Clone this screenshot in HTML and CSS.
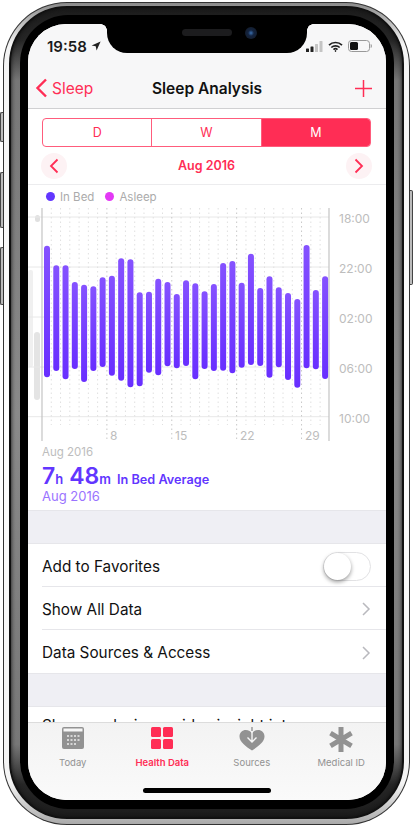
FILE: index.html
```html
<!DOCTYPE html>
<html lang="en">
<head>
	<meta charset="UTF-8">
	<title>Sleep Analysis</title>
	<link rel="stylesheet" href="styles.css">
</head>
<body>
	<div class="side-btn left-1"></div>
	<div class="side-btn left-2"></div>
	<div class="side-btn left-3"></div>
	<div class="side-btn right-1"></div>
	<div class="phone">
		<div class="rim">
			<div class="band">
				<div class="bezel">
					<div class="screen">
						<div class="notch">
							<span class="speaker"></span>
							<span class="camera"></span>
						</div>

						<div class="top-bar">
							<div class="status">
								<div class="status-left">
									<span class="time">19:58</span>
									<svg width="10" height="10" viewBox="0 0 10 10"><path d="M9.6.4 5.6 9.4 4.7 5.3.6 4.4z" fill="#222"/></svg>
								</div>
								<div class="status-right">
									<svg width="17" height="11" viewBox="0 0 17 11">
										<rect x="0" y="7.5" width="3" height="3.5" rx=".6" fill="#222"/>
										<rect x="4.5" y="5.5" width="3" height="5.5" rx=".6" fill="#222"/>
										<rect x="9" y="3" width="3" height="8" rx=".6" fill="#c4c4c4"/>
										<rect x="13.5" y="0" width="3" height="11" rx=".6" fill="#c4c4c4"/>
									</svg>
									<svg width="15" height="11" viewBox="0 0 15 11" fill="none" stroke="#222" stroke-width="1.7">
										<path d="M1 4.2a9.2 9.2 0 0 1 13 0"/>
										<path d="M3.3 6.5a6 6 0 0 1 8.4 0"/>
										<path d="M5.5 8.6a2.9 2.9 0 0 1 4 0"/>
										<circle cx="7.5" cy="10" r=".5" fill="#222" stroke-width="1"/>
									</svg>
									<svg width="24" height="12" viewBox="0 0 24 12">
										<rect x=".5" y=".5" width="21" height="11" rx="3" fill="none" stroke="#999"/>
										<rect x="2" y="2" width="8" height="8" rx="1.5" fill="#111"/>
										<path d="M22.7 4v4c.8-.3 1.2-1 1.2-2s-.4-1.7-1.2-2z" fill="#999"/>
									</svg>
								</div>
							</div>
							<div class="nav">
								<div class="nav-back">
									<svg width="13" height="20" viewBox="0 0 13 20" fill="none" stroke="#ff2d55" stroke-width="2.4"><path d="M11 1.5 2.5 10 11 18.5"/></svg>
									<span>Sleep</span>
								</div>
								<div class="nav-title">Sleep Analysis</div>
								<svg class="nav-plus" width="17" height="17" viewBox="0 0 17 17" stroke="#ff2d55" stroke-width="1.5"><path d="M8.5 0v17M0 8.5h17"/></svg>
							</div>
						</div>

						<div class="content">
							<div class="chart-card">
								<div class="segments">
									<div class="segment">D</div>
									<div class="segment">W</div>
									<div class="segment selected">M</div>
								</div>
								<div class="date-row">
									<div class="round-btn">
										<svg width="10" height="16" viewBox="0 0 10 16" fill="none" stroke="#ff2d55" stroke-width="1.8"><path d="M8.5 1.5 2 8l6.5 6.5"/></svg>
									</div>
									<span class="date-label">Aug 2016</span>
									<div class="round-btn">
										<svg width="10" height="16" viewBox="0 0 10 16" fill="none" stroke="#ff2d55" stroke-width="1.8"><path d="M1.5 1.5 8 8l-6.5 6.5"/></svg>
									</div>
								</div>
								<div class="legend">
									<span class="dot in-bed"></span><span class="legend-label">In Bed</span>
									<span class="dot asleep"></span><span class="legend-label">Asleep</span>
								</div>
								<div id="chart" class="chart"></div>
								<div class="chart-range">Aug 2016</div>
								<div class="average">
									<span class="big">7</span><span class="unit">h</span>
									<span class="big">48</span><span class="unit">m</span>
									<span class="average-label">In Bed Average</span>
								</div>
								<div class="average-range">Aug 2016</div>
							</div>

							<div class="gap"></div>
							<div class="list">
								<div class="row">
									<span>Add to Favorites</span>
									<div class="switch"><div class="knob"></div></div>
								</div>
								<div class="row">
									<span>Show All Data</span>
									<svg width="9" height="14" viewBox="0 0 9 14" fill="none" stroke="#b9b9be" stroke-width="1.5"><path d="M1 1l6 6-6 6"/></svg>
								</div>
								<div class="row">
									<span>Data Sources &amp; Access</span>
									<svg width="9" height="14" viewBox="0 0 9 14" fill="none" stroke="#b9b9be" stroke-width="1.5"><path d="M1 1l6 6-6 6"/></svg>
								</div>
							</div>
							<div class="gap"></div>
							<div class="about">Sleep analysis provides insight into your</div>
						</div>

						<div class="tabs">
							<div class="tab">
								<svg width="22" height="22" viewBox="0 0 22 22">
									<rect width="22" height="22" rx="2" fill="#929292"/>
									<rect x="1.5" y="1.5" width="19" height="3" fill="#f6f6f6"/>
									<g fill="#d6d6d6">
										<rect x="5" y="8" width="2" height="2"/><rect x="8.5" y="8" width="2" height="2"/><rect x="12" y="8" width="2" height="2"/><rect x="15.5" y="8" width="2" height="2"/>
										<rect x="5" y="12" width="2" height="2"/><rect x="8.5" y="12" width="2" height="2"/><rect x="12" y="12" width="2" height="2"/><rect x="15.5" y="12" width="2" height="2"/>
										<rect x="5" y="16" width="2" height="2"/><rect x="8.5" y="16" width="2" height="2"/><rect x="12" y="16" width="2" height="2"/>
									</g>
								</svg>
								<span>Today</span>
							</div>
							<div class="tab active">
								<svg width="22" height="22" viewBox="0 0 22 22" fill="#ff2d55">
									<rect width="10" height="10" rx="1.5"/><rect x="12" width="10" height="10" rx="1.5"/>
									<rect y="12" width="10" height="10" rx="1.5"/><rect x="12" y="12" width="10" height="10" rx="1.5"/>
								</svg>
								<span>Health Data</span>
							</div>
							<div class="tab">
								<svg width="26" height="24" viewBox="0 0 26 24">
									<path d="M13 23.5C7 19.5.5 15 .5 9.5.5 5.5 3.5 3 6.8 3c2.8 0 5 1.3 6.2 3.5C14.2 4.3 16.4 3 19.2 3c3.3 0 6.300 2.500 6.300 6.500 0 5.500-6.500 10-12.500 14z" fill="#929292"/>
									<path d="M13 0v15M8.5 10.5 13 15l4.500-4.500" fill="none" stroke="#f6f6f6" stroke-width="1.4"/>
									<path d="M13 0v4" stroke="#929292" stroke-width="1.4"/>
								</svg>
								<span>Sources</span>
							</div>
							<div class="tab">
								<svg width="24" height="25" viewBox="0 0 24 25" fill="none" stroke="#929292" stroke-width="5">
									<path d="M12 0v25M1.5 6.2l21 12.6M22.5 6.2l-21 12.6"/>
								</svg>
								<span>Medical ID</span>
							</div>
							<div class="home-bar"></div>
						</div>
					</div>
				</div>
			</div>
		</div>
	</div>
	<script src="chart.js"></script>
</body>
</html>
```
FILE: styles.css
```css
*{
	box-sizing: border-box;
}

html, body{
	margin: 0;
	padding: 0;
	height: 100%;
	background-color: #fff;
	font-family: "Inter", "Liberation Sans", sans-serif;
	overflow: hidden;
}

body{
	position: relative;
	padding: 2px 3px 3px;
}

/* phone frame */
.phone{
	height: 823px;
	padding: 1px;
	border-radius: 64px;
	background-color: #333;
}

.rim{
	height: 100%;
	padding: 3px 5px 5px;
	border-radius: 63px;
	background: linear-gradient(180deg, #8a8a8a 0, #f4f4f4 5%, #fff 50%, #f4f4f4 95%, #aaa 100%);
}

.band{
	height: 100%;
	padding: 7px 8px 8px 9px;
	border: 2px solid #111;
	border-radius: 58px;
	background: linear-gradient(180deg, #1c1c1c 0, #262626 4%, #777 9%, #8a8a8a 50%, #777 91%, #262626 96%, #1c1c1c 100%);
	box-shadow: inset 0 0 4px #111;
}

.bezel{
	height: 100%;
	padding: 9px 8px 9px 8px;
	border-radius: 48px;
	background-color: #000;
}

.side-btn{
	position: absolute;
	width: 3px;
	background-color: #bbb;
	border: 1px solid #444;
}

.left-1{ left: 0; top: 112px; height: 30px; border-right: 0; border-radius: 2px 0 0 2px; }
.left-2{ left: 0; top: 172px; height: 56px; border-right: 0; border-radius: 2px 0 0 2px; }
.left-3{ left: 0; top: 247px; height: 58px; border-right: 0; border-radius: 2px 0 0 2px; }
.right-1{ right: 0; top: 190px; height: 95px; border-left: 0; border-radius: 0 2px 2px 0; }

.screen{
	position: relative;
	display: flex;
	flex-direction: column;
	height: 100%;
	border-radius: 38px;
	background-color: #fff;
	overflow: hidden;
}

.notch{
	position: absolute;
	top: 0;
	left: 79px;
	width: 200px;
	height: 29px;
	border-radius: 0 0 20px 20px;
	background-color: #000;
}

.notch::before, .notch::after{
	content: "";
	position: absolute;
	top: 0;
	width: 6px;
	height: 6px;
}

.notch::before{
	left: -6px;
	background: radial-gradient(circle at 0 100%, transparent 5.5px, #000 6px);
}

.notch::after{
	right: -6px;
	background: radial-gradient(circle at 100% 100%, transparent 5.5px, #000 6px);
}

.speaker{
	position: absolute;
	top: 5px;
	left: 75px;
	width: 50px;
	height: 7px;
	border-radius: 4px;
	background-color: #1c1c1e;
}

.camera{
	position: absolute;
	top: 3px;
	left: 138px;
	width: 12px;
	height: 12px;
	border-radius: 50%;
	background: radial-gradient(circle, #3a6fb0 0, #13233f 35%, #151a22 100%);
}

/* top */
.top-bar{
	flex: none;
	height: 85px;
	background-color: #f7f7f8;
	border-bottom: 1px solid #d0d0d2;
}

.status{
	display: flex;
	justify-content: space-between;
	align-items: center;
	height: 44px;
	padding: 0 14px 0 19px;
}

.status-left{
	display: flex;
	align-items: center;
	gap: 4px;
}

.time{
	font-size: 15px;
	font-weight: 600;
	color: #1a1a1a;
}

.status-right{
	display: flex;
	align-items: center;
	gap: 5px;
}

.nav{
	position: relative;
	display: flex;
	align-items: center;
	justify-content: space-between;
	height: 40px;
	padding: 0 14px 0 7px;
}

.nav-back{
	display: flex;
	align-items: center;
	gap: 4px;
	font-size: 15.5px;
	color: #ff2d55;
}

.nav-title{
	position: absolute;
	left: 0;
	right: 0;
	text-align: center;
	font-size: 15.5px;
	font-weight: 600;
	color: #111;
}

/* content */
.content{
	flex: 1;
	overflow: hidden;
	min-height: 0;
}

.chart-card{
	height: 401px;
	padding-top: 9px;
}

.segments{
	display: flex;
	height: 29px;
	margin: 0 15px 0 14px;
	border: 1px solid #ff5c7c;
	border-radius: 4px;
	overflow: hidden;
}

.segment{
	flex: 1;
	display: flex;
	align-items: center;
	justify-content: center;
	font-size: 12.5px;
	color: #ff2d55;
	border-right: 1px solid #ff5c7c;
}

.segment:last-child{
	border-right: 0;
}

.segment.selected{
	background-color: #ff2d55;
	color: #fff;
}

.date-row{
	display: flex;
	align-items: center;
	justify-content: space-between;
	height: 38px;
	padding: 0 14px 0 13px;
	border-bottom: 1px solid #ececee;
}

.round-btn{
	display: flex;
	align-items: center;
	justify-content: center;
	width: 26px;
	height: 26px;
	border-radius: 50%;
	background-color: #fdf2f4;
}

.date-label{
	font-size: 12.5px;
	font-weight: 600;
	color: #ff2d55;
}

.legend{
	display: flex;
	align-items: center;
	height: 23px;
	padding-left: 18px;
	font-size: 11.5px;
	color: #ababab;
}

.dot{
	width: 9px;
	height: 9px;
	border-radius: 50%;
	margin-right: 5px;
}

.dot.in-bed{
	background-color: #6236ff;
}

.dot.asleep{
	background-color: #e339f5;
}

.legend-label{
	margin-right: 11px;
}

.chart{
	height: 234px;
}

.chart svg{
	display: block;
}

.chart text{
	font-family: "Inter", "Liberation Sans", sans-serif;
	font-size: 12px;
	fill: #bdbdbd;
}

.chart-range{
	margin-top: 3px;
	padding-left: 14px;
	font-size: 11.5px;
	line-height: 14px;
	color: #bdbdbd;
}

.average{
	display: flex;
	align-items: baseline;
	margin-top: 3px;
	padding-left: 14px;
	color: #6236ff;
	line-height: 28px;
}

.big{
	font-size: 23px;
	font-weight: 600;
}

.unit{
	font-size: 13px;
	font-weight: 600;
	margin-right: 6px;
}

.average-label{
	font-size: 12.7px;
	font-weight: 600;
}

.average-range{
	margin-top: -4px;
	padding-left: 14px;
	font-size: 13px;
	line-height: 13px;
	color: #9a73ff;
}

.gap{
	height: 34px;
	background-color: #efeff4;
	border-top: 1px solid #e6e6ea;
	border-bottom: 1px solid #e6e6ea;
}

.row{
	display: flex;
	align-items: center;
	justify-content: space-between;
	height: 43px;
	margin-left: 14px;
	padding-top: 2px;
	padding-right: 15px;
	font-size: 15.3px;
	color: #111;
	border-bottom: 1px solid #e6e6ea;
}

.row:last-child{
	border-bottom: 0;
}

.switch{
	position: relative;
	width: 48px;
	height: 29px;
	border: 1px solid #e2e2e4;
	border-radius: 15px;
	background-color: #fff;
}

.knob{
	position: absolute;
	top: 0;
	left: 0;
	width: 27px;
	height: 27px;
	border-radius: 50%;
	background-color: #fff;
	box-shadow: 0 2px 4px rgba(0,0,0,.4);
}

.about{
	padding: 9px 14px 0;
	font-size: 15.3px;
	color: #111;
	white-space: nowrap;
}

/* tabs */
.tabs{
	position: absolute;
	left: 0;
	right: 0;
	bottom: 0;
	display: flex;
	height: 78px;
	padding-top: 4px;
	background: linear-gradient(180deg, #f3f3f3, #fafafa);
	border-top: 1px solid #dcdcdc;
}

.tab{
	flex: 1;
	display: flex;
	flex-direction: column;
	align-items: center;
	justify-content: space-between;
	height: 41px;
	font-size: 9.5px;
	color: #929292;
}

.tab.active{
	color: #ff2d55;
	font-weight: 600;
}

.home-bar{
	position: absolute;
	left: 115px;
	bottom: 7px;
	width: 128px;
	height: 5px;
	border-radius: 3px;
	background-color: #000;
}
```
FILE: chart.js
```js
// each bar: [top, bottom] in page pixels read off the month
var bars = [
	[245.7,377.3],[265.3,371],[265.3,379.3],[282,369],[284.7,382],[286.3,371],[277.3,367],[275.7,375.7],
	[258.3,380.7],[259.3,387.3],[292.3,386.3],[291.7,372.7],[278.7,375.3],[282,366.3],[294,368.3],[280.3,366],
	[283.3,379.3],[291.3,369],[284,371],[263,370.7],[261,373.3],[282.7,367.7],[253.7,365],[288,366],
	[276.3,377.7],[287.3,367.3],[293,380],[299,387.7],[245,368.3],[290,369.3],[276.3,379]
];

var left = 42;
var svg = '<svg width="358" height="234" viewBox="28 208 358 234">';

svg += '<defs><linearGradient id="barfill" x1="0" y1="0" x2="0" y2="1">';
svg += '<stop offset="0" stop-color="#8552ff"/><stop offset="1" stop-color="#682eff"/>';
svg += '</linearGradient></defs>';

// bits of the previous month sticking out at the left
svg += '<rect x="28" y="270" width="5" height="97" rx="2" fill="#f0f0f0"/>';
svg += '<rect x="34" y="332" width="6" height="68" rx="3" fill="#e4e4e4"/>';
svg += '<rect x="35" y="215" width="5" height="7" rx="2.5" fill="#e0e0e0"/>';

[217,267,317,367,416.7].forEach(function(y){
	svg += '<line x1="28" x2="329" y1="'+y+'" y2="'+y+'" stroke="#e8e8e8"/>';
});

for(var i = 1; i < 31; i++){
	var x = left + i * 9.27;
	var strong = i % 7 == 0;
	var end = strong ? 441 : 425;
	svg += '<line x1="'+x+'" x2="'+x+'" y1="208" y2="'+end+'" stroke="'+(strong ? '#c8c8c8' : '#e0e0e0')+'" stroke-dasharray="1.5 3"/>';
}

svg += '<line x1="42" x2="42" y1="208" y2="441" stroke="#c4c4c4" stroke-width="1.2"/>';
svg += '<line x1="329" x2="329" y1="208" y2="441" stroke="#c4c4c4" stroke-width="1.2"/>';

bars.forEach(function(b, i){
	var x = 47 + i * 9.27;
	svg += '<rect x="'+(x-3)+'" y="'+b[0]+'" width="6" height="'+(b[1]-b[0])+'" rx="3" fill="url(#barfill)"/>';
});

['18:00','22:00','02:00','06:00','10:00'].forEach(function(t, i){
	svg += '<text x="339" y="'+(222.5+i*50)+'">'+t+'</text>';
});

[[8,110],[15,175],[22,240],[29,305]].forEach(function(d){
	svg += '<text x="'+d[1]+'" y="440">'+d[0]+'</text>';
});

svg += '</svg>';
document.getElementById('chart').innerHTML = svg;
```
